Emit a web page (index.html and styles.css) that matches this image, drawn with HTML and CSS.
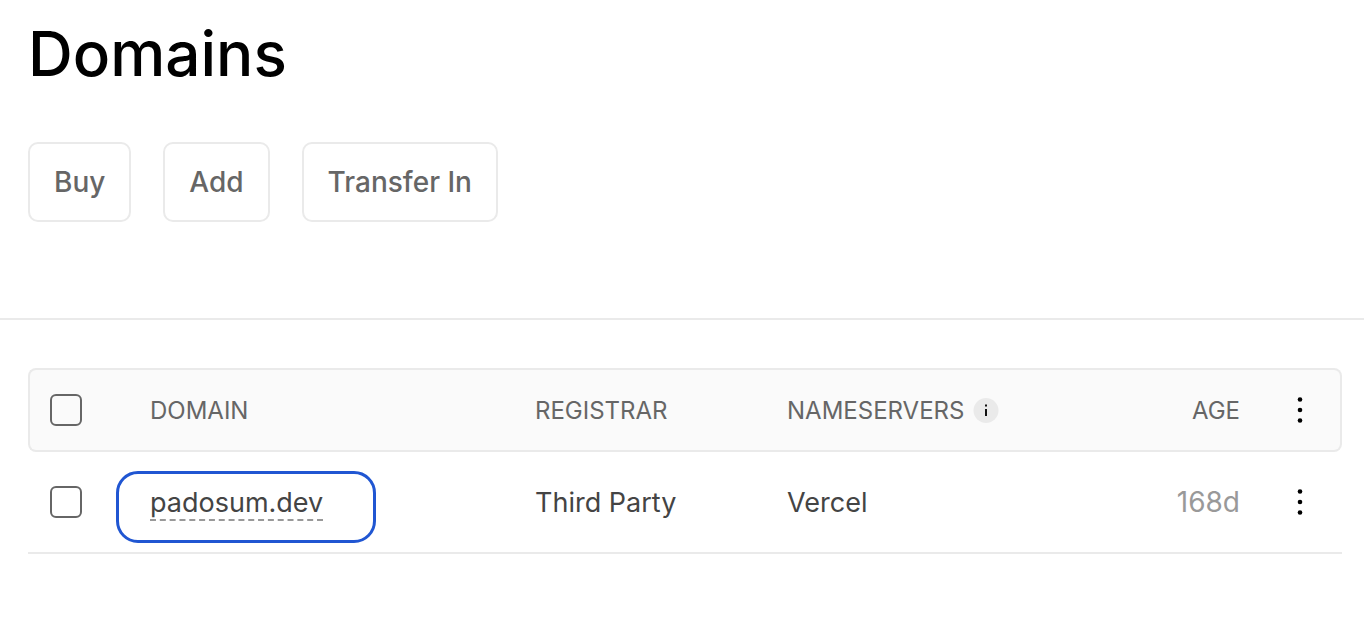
FILE: index.html
```html
<!DOCTYPE html>
<html lang="en">
<head>
<meta charset="utf-8">
<meta name="viewport" content="width=device-width, initial-scale=1">
<title>Domains</title>
<link rel="stylesheet" href="styles.css">
</head>
<body>
<header class="page-header">
  <h1 class="title">Domains</h1>
  <div class="actions">
    <button class="button" type="button">Buy</button>
    <button class="button" type="button">Add</button>
    <button class="button" type="button">Transfer In</button>
  </div>
</header>
<main class="content">
  <table class="domains">
    <thead>
      <tr>
        <th class="col-check" scope="col"><input class="checkbox" type="checkbox" aria-label="Select all domains"></th>
        <th class="col-domain text" scope="col">DOMAIN</th>
        <th class="col-registrar text" scope="col">REGISTRAR</th>
        <th class="col-nameservers text" scope="col"><span class="with-info">NAMESERVERS
          <svg class="info" viewBox="0 0 26 26" role="img" aria-label="Nameserver information"><circle cx="13" cy="12.500" r="12.500" fill="#eaeaea"/><path d="M12 6.500h2v2h-2zM12 11h2v7h-2z" fill="#111"/></svg></span></th>
        <th class="col-age text" scope="col">AGE</th>
        <th class="col-menu" scope="col"><button class="menu" type="button" aria-label="Table options"><svg class="dots" viewBox="0 0 8 28"><circle cx="4" cy="3.500" r="2.300"/><circle cx="4" cy="14" r="2.300"/><circle cx="4" cy="24.500" r="2.300"/></svg></button></th>
      </tr>
    </thead>
    <tbody>
      <tr>
        <td><input class="checkbox" type="checkbox" aria-label="Select padosum.dev"></td>
        <td class="domain"><span class="highlighted"><a class="domain-link" href="#">padosum.dev</a></span></td>
        <td class="text">Third Party</td>
        <td class="text">Vercel</td>
        <td class="age">168d</td>
        <td class="col-menu"><button class="menu" type="button" aria-label="Options for padosum.dev"><svg class="dots" viewBox="0 0 8 28"><circle cx="4" cy="3.500" r="2.300"/><circle cx="4" cy="14" r="2.300"/><circle cx="4" cy="24.500" r="2.300"/></svg></button></td>
      </tr>
    </tbody>
  </table>
</main>
</body>
</html>
```
FILE: styles.css
```css
* {
  box-sizing: border-box;
}

body {
  margin: 0;
  background: #fff;
  color: #444;
  font-family: Inter, "Liberation Sans", sans-serif;
  font-size: 28px;
  line-height: 40px;
}

.page-header {
  padding: 14px 28px 96px;
  border-bottom: 2px solid #eaeaea;
}

.title {
  margin: 0 0 48px;
  color: #000;
  font-size: 62px;
  font-weight: 500;
  line-height: 80px;
}

.actions {
  display: flex;
  gap: 32px;
}

.button {
  height: 80px;
  padding: 0 24px;
  border: 2px solid #eaeaea;
  border-radius: 10px;
  background: #fff;
  color: #666;
  font: inherit;
  font-weight: 500;
}

.content {
  padding: 48px 22px 48px 28px;
}

.domains {
  width: 100%;
  table-layout: fixed;
  border-spacing: 0;
}

.domains th,
.domains td {
  padding: 0;
  text-align: left;
  vertical-align: middle;
}

.domains .text {
  padding-top: 2px;
}

.domains .domain {
  padding-top: 4px;
}

.domains th {
  height: 84px;
  border: solid #eaeaea;
  border-width: 2px 0;
  background: #fafafa;
  color: #666;
  font-size: 24px;
  font-weight: 400;
}

.domains th:first-child {
  border-left-width: 2px;
  border-radius: 8px 0 0 8px;
  padding-left: 20px;
}

.domains th:last-child {
  border-right-width: 2px;
  border-radius: 0 8px 8px 0;
}

.domains td {
  height: 102px;
  border-bottom: 2px solid #eaeaea;
  font-size: 27px;
}

.domains td:first-child {
  padding-left: 22px;
}

.domains .col-check {
  width: 122px;
}

.domains .col-domain {
  width: 385px;
}

.domains .col-registrar {
  width: 252px;
}

.domains .col-age {
  width: 160px;
  text-align: right;
}

.domains .age {
  color: #999;
  font-size: 28px;
  text-align: right;
}

.domains .col-menu {
  width: 102px;
  padding-left: 46px;
}

.checkbox {
  display: block;
  width: 32px;
  height: 32px;
  margin: 0;
  border: 2px solid #666;
  border-radius: 6px;
  background: transparent;
  appearance: none;
}

.with-info {
  display: flex;
  align-items: center;
  gap: 9px;
}

.info {
  width: 26px;
  height: 26px;
}

.menu {
  display: block;
  padding: 0 10px;
  border: 0;
  background: none;
}

.dots {
  display: block;
  width: 8px;
  height: 28px;
  fill: #000;
}

.highlighted {
  position: relative;
  display: block;
  width: fit-content;
}

.highlighted::before {
  content: "";
  position: absolute;
  inset: -16px -53px -22px -34px;
  border: 3px solid #2056d2;
  border-radius: 22px;
  pointer-events: none;
}

.domain-link {
  display: block;
  color: #444;
  line-height: 32px;
  text-decoration: none;
  border-bottom: 2px dashed #999;
}
```
